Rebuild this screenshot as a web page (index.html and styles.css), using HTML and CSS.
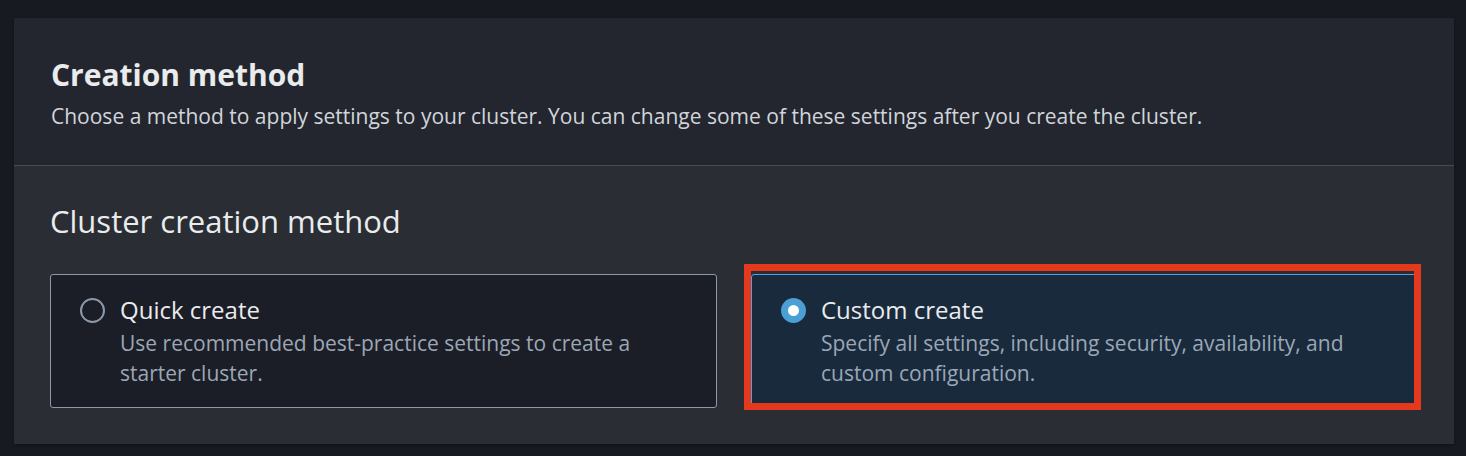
FILE: index.html
```html
<!DOCTYPE html>
<html lang="en">
<head>
<meta charset="utf-8">
<title>Creation method</title>
<link rel="stylesheet" href="styles.css">
</head>
<body>
<section class="panel">
  <header class="panel-header">
    <h2 class="panel-title">Creation method</h2>
    <p class="panel-desc">Choose a method to apply settings to your cluster. You can change some of these settings after you create the cluster.</p>
  </header>
  <div class="panel-body">
    <h3 class="group-title">Cluster creation method</h3>
    <div class="tiles">
      <label class="tile">
        <span class="radio"></span>
        <span class="tile-text">
          <span class="tile-label">Quick create</span>
          <span class="tile-desc">Use recommended best-practice settings to create a starter cluster.</span>
        </span>
      </label>
      <label class="tile tile-selected">
        <span class="radio radio-checked"></span>
        <span class="tile-text">
          <span class="tile-label">Custom create</span>
          <span class="tile-desc">Specify all settings, including security, availability, and custom configuration.</span>
        </span>
        <span class="highlight"></span>
      </label>
    </div>
  </div>
</section>
</body>
</html>
```

FILE: styles.css
```css
* { box-sizing: border-box; }
html, body { margin: 0; padding: 0; }
body {
  background: #171a21;
  font-family: "Open Sans", "Noto Sans", sans-serif;
  color: #e9ebed;
  padding: 18px 12px 11px 14px;
}
.panel {
  width: 1440px;
  background: #2a2d33;
  box-shadow: 0 1px 3px rgba(0,0,0,0.4);
}
.panel-header {
  background: #23262e;
  border-bottom: 1px solid #474c54;
  padding: 36px 36px 0 37px;
  height: 148px;
}
.panel-title {
  margin: 0;
  font-size: 30px;
  line-height: 42px;
  font-weight: 700;
  color: #e9ebed;
}
.panel-desc {
  margin: 6px 0 0;
  font-size: 21px;
  line-height: 28px;
  color: #d1d5db;
}
.panel-body {
  padding: 33px 36px 36px 36px;
}
.group-title {
  margin: 0;
  font-size: 31px;
  line-height: 44px;
  font-weight: 400;
  color: #e9ebed;
}
.tiles {
  display: grid;
  grid-template-columns: 1fr 1fr;
  column-gap: 34px;
  margin-top: 31px;
}
.tile {
  position: relative;
  display: flex;
  gap: 15px;
  align-items: flex-start;
  height: 134px;
  padding: 19px 20px 0 29px;
  background: #1b1e26;
  border: 1px solid #8d99a8;
  border-radius: 3px;
}
.tile-selected {
  background: #192a3d;
  border-color: #539fe5;
}
.radio {
  flex: none;
  width: 25px;
  height: 25px;
  margin-top: 4px;
  border: 2px solid #8d99a8;
  border-radius: 50%;
}
.radio-checked {
  border: 7px solid #4a9fd4;
  background: #ffffff;
}
.tile-text {
  display: flex;
  flex-direction: column;
}
.tile-label {
  font-size: 24px;
  line-height: 32px;
  color: #e9ebed;
}
.tile-desc {
  margin-top: 2px;
  font-size: 21px;
  line-height: 30px;
  color: #9ba7b6;
}
.highlight {
  position: absolute;
  left: -8px;
  top: -11px;
  right: -4px;
  bottom: -3px;
  border: 7px solid #e5391d;
  pointer-events: none;
}
```
